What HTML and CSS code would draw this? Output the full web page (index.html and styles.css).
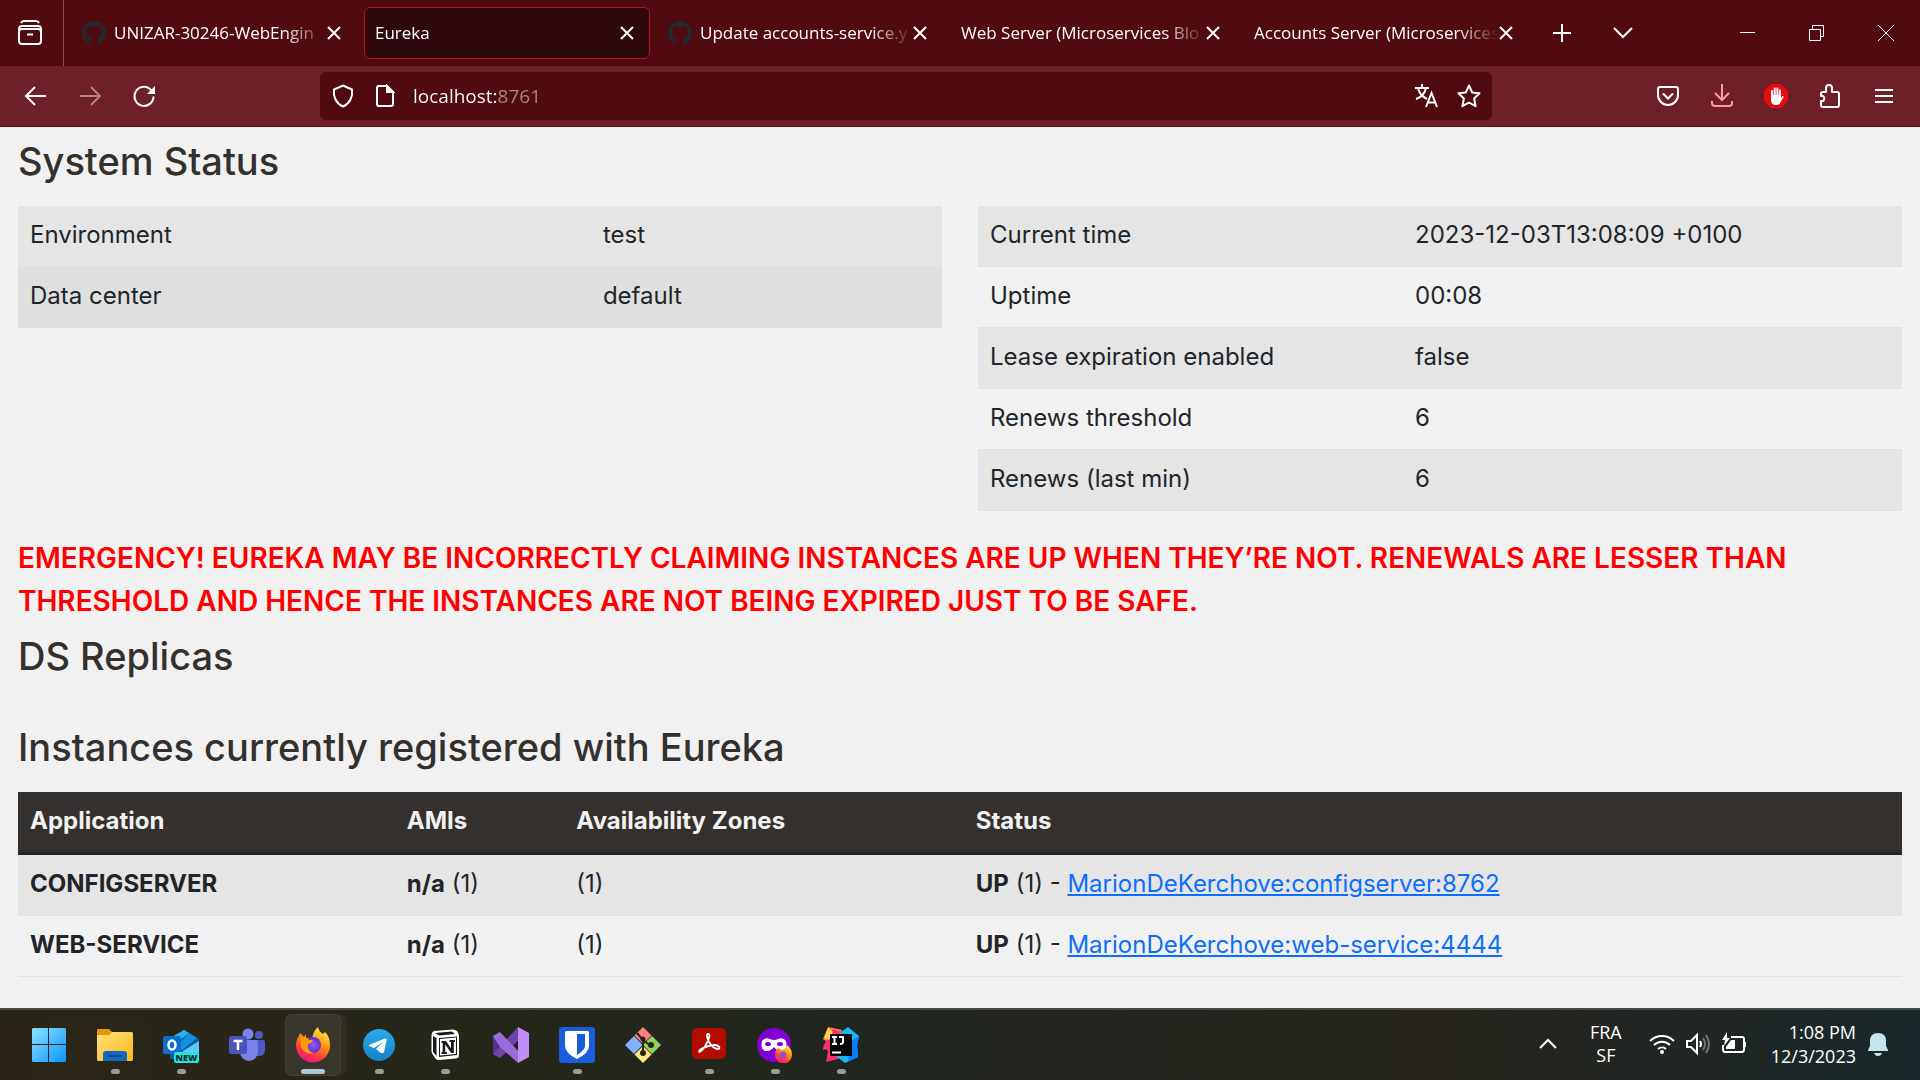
FILE: index.html
```html
<!DOCTYPE html>
<html lang="en">
<head>
<meta charset="utf-8">
<title>Eureka</title>
<link rel="stylesheet" href="styles.css">
</head>
<body>
<header class="browser">
  <div class="tabstrip">
    <button class="recent" aria-label="Recent browsing">
      <svg width="26" height="26" viewBox="0 0 26 26" fill="none" stroke="#fff" stroke-width="2"><rect x="2" y="9" width="22" height="15" rx="3"/><path d="M2 11V9q0-3 3-3h16q3 0 3 3v2M4 3q1-2 3-2h12q2 0 3 2M10 14.500h6"/></svg>
    </button>
    <div class="tabs">
      <div class="tab">
        <svg class="favicon" width="24" height="24" viewBox="0 0 16 16" fill="#24292e"><path d="M8 0C3.580 0 0 3.580 0 8c0 3.540 2.290 6.530 5.470 7.590.4.070.55-.17.55-.38 0-.19-.01-.82-.01-1.490-2.010.37-2.530-.49-2.690-.94-.09-.23-.48-.94-.82-1.130-.28-.15-.68-.52-.01-.53.63-.01 1.080.58 1.230.82.72 1.210 1.870.87 2.330.66.07-.52.28-.87.51-1.070-1.780-.2-3.640-.89-3.640-3.950 0-.87.31-1.590.82-2.150-.08-.2-.36-1.020.08-2.120 0 0 .67-.21 2.200.82a7.600 7.600 0 0 1 4 0c1.530-1.040 2.200-.82 2.200-.82.44 1.100.16 1.920.08 2.120.51.56.82 1.270.82 2.150 0 3.070-1.870 3.750-3.650 3.950.29.25.54.73.54 1.480 0 1.070-.01 1.930-.01 2.200 0 .21.15.46.55.38A8 8 0 0 0 16 8c0-4.420-3.580-8-8-8z"/></svg>
        <button class="title">UNIZAR-30246-WebEngin</button>
        <button class="close" aria-label="Close tab"><svg width="14" height="14" viewBox="0 0 14 14"><path d="M1 1l12 12M13 1L1 13"/></svg></button>
      </div>
      <div class="tab active">
        <button class="title">Eureka</button>
        <button class="close" aria-label="Close tab"><svg width="14" height="14" viewBox="0 0 14 14"><path d="M1 1l12 12M13 1L1 13"/></svg></button>
      </div>
      <div class="tab">
        <svg class="favicon" width="24" height="24" viewBox="0 0 16 16" fill="#24292e"><path d="M8 0C3.580 0 0 3.580 0 8c0 3.540 2.290 6.530 5.470 7.590.4.070.55-.17.55-.38 0-.19-.01-.82-.01-1.490-2.010.37-2.530-.49-2.690-.94-.09-.23-.48-.94-.82-1.130-.28-.15-.68-.52-.01-.53.63-.01 1.080.58 1.230.82.72 1.210 1.870.87 2.330.66.07-.52.28-.87.51-1.070-1.780-.2-3.640-.89-3.640-3.950 0-.87.31-1.590.82-2.150-.08-.2-.36-1.020.08-2.120 0 0 .67-.21 2.200.82a7.600 7.600 0 0 1 4 0c1.530-1.040 2.200-.82 2.200-.82.44 1.100.16 1.920.08 2.120.51.56.82 1.270.82 2.150 0 3.070-1.870 3.750-3.650 3.950.29.25.54.73.54 1.480 0 1.070-.01 1.930-.01 2.200 0 .21.15.46.55.38A8 8 0 0 0 16 8c0-4.420-3.580-8-8-8z"/></svg>
        <button class="title">Update accounts-service.y</button>
        <button class="close" aria-label="Close tab"><svg width="14" height="14" viewBox="0 0 14 14"><path d="M1 1l12 12M13 1L1 13"/></svg></button>
      </div>
      <div class="tab">
        <button class="title">Web Server (Microservices Blo</button>
        <button class="close" aria-label="Close tab"><svg width="14" height="14" viewBox="0 0 14 14"><path d="M1 1l12 12M13 1L1 13"/></svg></button>
      </div>
      <div class="tab">
        <button class="title">Accounts Server (Microservices</button>
        <button class="close" aria-label="Close tab"><svg width="14" height="14" viewBox="0 0 14 14"><path d="M1 1l12 12M13 1L1 13"/></svg></button>
      </div>
    </div>
    <div class="tabtools">
      <button aria-label="New tab"><svg width="18" height="18" viewBox="0 0 18 18"><path d="M9 0v18M0 9h18" stroke-width="2"/></svg></button>
      <button aria-label="List all tabs"><svg width="20" height="12" viewBox="0 0 20 12"><path d="M1 1l9 9 9-9" stroke-width="2"/></svg></button>
    </div>
    <div class="window">
      <button aria-label="Minimize"><svg width="16" height="16" viewBox="0 0 16 16"><path d="M0 7.500h15"/></svg></button>
      <button aria-label="Restore"><svg width="16" height="16" viewBox="0 0 16 16"><path d="M.5 4.500h11v11H.5zM3.500 4V.5h11v11H12"/></svg></button>
      <button aria-label="Close"><svg width="16" height="16" viewBox="0 0 16 16"><path d="M0 0l16 16M16 0L0 16"/></svg></button>
    </div>
  </div>
  <div class="toolbar">
    <div class="nav">
      <button aria-label="Back"><svg width="24" height="24" viewBox="0 0 24 24"><path d="M22 12H2M11 3l-9 9 9 9"/></svg></button>
      <button aria-label="Forward" disabled><svg width="24" height="24" viewBox="0 0 24 24"><path d="M2 12h20M13 3l9 9-9 9"/></svg></button>
      <button aria-label="Reload"><svg width="24" height="24" viewBox="0 0 24 24"><path d="M21.500 12.500A9.500 9.500 0 1 1 18 5l3 3"/><path d="M23 2v8h-8z" fill="#fff" stroke="none"/></svg></button>
    </div>
    <div class="urlbar">
      <button aria-label="Tracking protection"><svg width="24" height="24" viewBox="0 0 24 24"><path d="M12 1.500l9 4c1 7-2 14-9 17-7-3-10-10-9-17z"/></svg></button>
      <button aria-label="Site information"><svg width="20" height="24" viewBox="0 0 20 24"><path d="M4 2h8l6 6v12q0 2-2 2H4q-2 0-2-2V4q0-2 2-2z"/><path d="M12 2v6h6z" fill="#fff"/></svg></button>
      <input class="address" type="text" aria-label="Address" value="localhost:8761">
      <button aria-label="Translate"><svg width="24" height="24" viewBox="0 0 24 24"><path d="M0 4h14M7 0v4M3 4c1 5 5 9 9 11M11 4c-1 5-4 9-10 11M11 23l5.500-14L22 23M13 18.500h7.500"/></svg></button>
      <button aria-label="Bookmark"><svg width="24" height="24" viewBox="0 0 24 24"><path stroke-linejoin="round" d="M12 1.500l3.200 7 7.300.8-5.400 5.200 1.500 7.700L12 18.500l-6.600 3.700 1.500-7.700L1.500 9.300l7.300-.8z"/></svg></button>
    </div>
    <div class="actions">
      <button aria-label="Pocket"><svg width="24" height="24" viewBox="0 0 24 24"><path d="M4 3h16q2 0 2 2v6a10 10 0 0 1-20 0V5q0-2 2-2z"/><path d="M7 9.500l5 5 5-5"/></svg></button>
      <button aria-label="Downloads"><svg class="pink" width="24" height="24" viewBox="0 0 24 24"><path d="M12 0v16M5 9l7 7 7-7M2 17v2q0 3 3 3h14q3 0 3-3v-2"/></svg></button>
      <button aria-label="AdBlock"><svg width="24" height="24" viewBox="0 0 24 24"><path fill="#e40d0d" stroke="none" d="M7 0h10l7 7v10l-7 7H7l-7-7V7z"/><g stroke-linecap="round" stroke-width="2"><path d="M8 12V7M10.700 12V4.500M13.400 12V4.500M16 12V6.500"/><path fill="#fff" stroke="none" d="M7 11h10v3l1.500-2q1.500-.5 1 1L17 17.500q-1 3.500-5 3.500-5 0-5-5z"/></g></svg></button>
      <button aria-label="Extensions"><svg width="24" height="24" viewBox="0 0 24 24"><path stroke-linejoin="round" d="M8 8V4a3 3 0 0 1 6 0v4h5q2 0 2 2v11q0 2-2 2H5q-2 0-2-2v-4h2a3 3 0 0 0 0-5H3v-2q0-2 2-2z"/></svg></button>
      <button aria-label="Menu"><svg width="20" height="20" viewBox="0 0 20 20"><path d="M1 4h18M1 10h18M1 16h18"/></svg></button>
    </div>
  </div>
</header>

<main class="page">
  <h1>System Status</h1>
  <div class="status">
    <table class="grid general">
      <tbody>
        <tr><td class="name">Environment</td><td>test</td></tr>
        <tr><td>Data center</td><td>default</td></tr>
      </tbody>
    </table>
    <table class="grid striped times">
      <tbody>
        <tr><td class="name">Current time</td><td>2023-12-03T13:08:09 +0100</td></tr>
        <tr><td>Uptime</td><td>00:08</td></tr>
        <tr><td>Lease expiration enabled</td><td>false</td></tr>
        <tr><td>Renews threshold</td><td>6</td></tr>
        <tr><td>Renews (last min)</td><td>6</td></tr>
      </tbody>
    </table>
  </div>
  <p class="warning">EMERGENCY! EUREKA MAY BE INCORRECTLY CLAIMING INSTANCES ARE UP WHEN THEY’RE NOT. RENEWALS ARE LESSER THAN<br>THRESHOLD AND HENCE THE INSTANCES ARE NOT BEING EXPIRED JUST TO BE SAFE.</p>
  <h1>DS Replicas</h1>
  <h1 class="spaced">Instances currently registered with Eureka</h1>
  <table class="grid striped instances">
    <thead>
      <tr><th class="app-name">Application</th><th class="amis">AMIs</th><th class="zones">Availability Zones</th><th>Status</th></tr>
    </thead>
    <tbody>
      <tr><td><b>CONFIGSERVER</b></td><td><b>n/a</b> (1)</td><td>(1)</td><td><b>UP</b> (1) - <a href="#config">MarionDeKerchove:configserver:8762</a></td></tr>
      <tr><td><b>WEB-SERVICE</b></td><td><b>n/a</b> (1)</td><td>(1)</td><td><b>UP</b> (1) - <a href="#web">MarionDeKerchove:web-service:4444</a></td></tr>
    </tbody>
  </table>
</main>

<footer class="taskbar">
  <nav class="apps" aria-label="Taskbar">
    <button class="app" aria-label="Start"><svg width="36" height="36" viewBox="0 0 36 36"><defs><linearGradient id="win" x1="0" y1="0" x2="1" y2="1"><stop offset="0" stop-color="#8be3ff"/><stop offset="1" stop-color="#0a95ff"/></linearGradient></defs><path fill="url(#win)" d="M2 1h15v16H1V2zM18 1h16l1 1v15H18zM1 18h16v17H2l-1-1zM18 18h17v16l-1 1H18z"/></svg></button>
    <button class="app open" aria-label="File Explorer"><svg width="36" height="36" viewBox="0 0 36 36"><defs><linearGradient id="fold" x1="0" y1="0" x2="1" y2="1"><stop offset="0" stop-color="#ffe07a"/><stop offset="1" stop-color="#fbb917"/></linearGradient></defs><path fill="#e09a08" d="M0 3q0-1 1-1h11l3 3v5H0z"/><path fill="url(#fold)" d="M0 8h12l3-3h20l1 1v27l-1 1H1l-1-1z"/><path fill="#0e6abf" d="M6 34v-7q0-3 3-3h18q3 0 3 3v7z"/><path stroke="#08458c" stroke-width="2" d="M11 29h14"/></svg></button>
    <button class="app open" aria-label="Outlook (new)"><svg width="36" height="36" viewBox="0 0 36 36"><path fill="#0a5dad" d="M7 11L21 3l15 9v20H7z"/><path fill="#2cb0ef" d="M7 11L21 3l5 3-14 11-5-1z"/><path fill="#1590e0" d="M26 6l8 5-15 12-5-4z"/><path fill="#5cc8f8" d="M36 14v18H20v-8z"/><rect y="9" width="18" height="18" rx="2" fill="#0f6ecb"/><ellipse cx="9" cy="18" rx="3.500" ry="4.500" fill="none" stroke="#fff" stroke-width="2.500"/><rect x="11" y="25" width="25" height="11" rx="2" fill="#25e3d9"/><text x="23.500" y="34" text-anchor="middle" font-family="Open Sans, sans-serif" font-size="9" font-weight="800" fill="#08302f">NEW</text></svg></button>
    <button class="app" aria-label="Teams"><svg width="36" height="36" viewBox="0 0 36 36"><circle cx="30" cy="8" r="4" fill="#5059c9"/><path fill="#5059c9" d="M24 13h10q2 0 2 2v8q0 6-6 6h-6z"/><circle cx="19" cy="7" r="5.500" fill="#7b83eb"/><path fill="#7b83eb" d="M10 13h17q2 0 2 2v10a9 9 0 0 1-18 0z"/><rect y="9" width="18" height="18" rx="2" fill="#4b53bc"/><path fill="none" stroke="#fff" stroke-width="2.500" d="M4.500 14h9M9 14v9"/></svg></button>
    <button class="app open current" aria-label="Firefox"><svg width="36" height="36" viewBox="0 0 36 36"><defs><linearGradient id="ff" x1=".8" y1="0" x2=".3" y2="1"><stop offset="0" stop-color="#fff44f"/><stop offset=".4" stop-color="#ff980e"/><stop offset=".75" stop-color="#ff3647"/><stop offset="1" stop-color="#e31587"/></linearGradient><radialGradient id="ffc"><stop offset="0" stop-color="#9059ff"/><stop offset="1" stop-color="#6030c0"/></radialGradient></defs><path fill="url(#ff)" d="M23 0q1 5 5 7l2-2q5 5 5 13a17 17 0 0 1-34 1q0-7 3-10l1-3 4 4 2-3v4q3-1 6 1 1-8 6-12z"/><circle cx="18" cy="18" r="8" fill="url(#ffc)"/><path fill="#ff980e" d="M5 11q6-2 9 2h4q-1 3-5 4-1 8 6 9-9 2-13-6z"/></svg></button>
    <button class="app open" aria-label="Telegram"><svg width="36" height="36" viewBox="0 0 36 36"><defs><linearGradient id="tg" x1="0" y1="0" x2="0" y2="1"><stop offset="0" stop-color="#2aabee"/><stop offset="1" stop-color="#1583c4"/></linearGradient></defs><circle cx="18" cy="18" r="16" fill="url(#tg)"/><path fill="#fff" d="M8 18l16-6.500q2 0 1.500 2L23 25q-1 2-3 1l-5-4 7-7-9 6-5-2z"/></svg></button>
    <button class="app open" aria-label="Notion"><svg width="36" height="36" viewBox="0 0 36 36"><path fill="#fff" d="M7 4l19-1.500q2 0 4 1.500l1 2q1 1 1 3v19q0 3-3 3.500l-17 1.500q-3 0-4-2l-2.500-4q-1-1-1-3V8q0-3 2.500-4z"/><path fill="#1b1b1b" d="M8 6l17-1.500L28 7l-16 1.500zM6 9l3.500 2v18L6 25zM12 11l18-1.500V28l-18 2z"/><path fill="#fff" d="M13 12l16-1.500V27l-16 1.500z"/><path fill="#1b1b1b" d="M14.500 14h4.500l5 7.500v-6.500h-1.500v-2H28v2h-1.200v11h-2.600l-6-8.500v7.500H20v2h-5.500v-2h1.200V16h-1.200z"/></svg></button>
    <button class="app" aria-label="Visual Studio"><svg width="36" height="36" viewBox="0 0 36 36"><path fill="#52338f" d="M0 9l7-4v26l-7-4z"/><path fill="#6d45a8" d="M0 27L25 0l4 10L7 31z"/><path fill="#9a6bdb" d="M0 9l7-4 23 24-5 7L7 20z"/><path fill="#c28df5" d="M25 0l11 6v24l-11 6z"/></svg></button>
    <button class="app open" aria-label="Bitwarden"><svg width="36" height="36" viewBox="0 0 36 36"><rect width="36" height="36" rx="3" fill="#175ddc"/><path fill="#fff" d="M7 4h22l1 1v14q0 7-12 13Q6 26 6 19V5z"/><path fill="#175ddc" d="M18 7h8v12q0 4-8 9z"/></svg></button>
    <button class="app" aria-label="Git"><svg width="36" height="36" viewBox="0 0 36 36"><path fill="#ff8080" d="M18 0l8.500 8.500L18 17 9.500 8.500z"/><path fill="#80b3ff" d="M9 9l8.500 9L9 27 0 18z"/><path fill="#8dd35f" d="M27 9l9 9-9 9-9-9z"/><path fill="#ffe680" d="M18 19l8.500 8.500L18 36l-8.500-8.500z"/><path d="M12 6l6 7v13M18 13l8 6" fill="none" stroke="#25261b" stroke-width="2"/><g fill="#25261b"><circle cx="18" cy="12" r="2.500"/><circle cx="26" cy="18" r="3"/><circle cx="18" cy="26" r="3"/></g></svg></button>
    <button class="app open" aria-label="Acrobat"><svg width="36" height="36" viewBox="0 0 36 36"><rect x="1" y="1" width="34" height="31" rx="5" fill="#b30b00"/><path fill="none" stroke="#fff" stroke-width="1.800" d="M17 7c-2 0-1 4 1 8s6 7 9 7 1-4-3-4c-5 0-10 2-14 4-3 2-2 4 0 2 3-2 6-8 8-13 1-3 0-4-1-4z"/></svg></button>
    <button class="app open" aria-label="Firefox Private Browsing"><svg width="36" height="36" viewBox="0 0 36 36"><circle cx="17" cy="18" r="17" fill="#8000d7"/><path fill="#fff" d="M5 14q3-4 8-2 4 2 8 0 5-2 8 2 2 10-5 10-4 0-7-4-3 4-7 4-7 0-5-10z"/><g fill="#8000d7"><ellipse cx="11" cy="17" rx="3" ry="2"/><ellipse cx="23" cy="17" rx="3" ry="2"/></g><path fill="url(#ff)" d="M30 18q5 4 5 10a8.500 8.500 0 0 1-17 0q0-5 3-7l4 2q4-1 5-5z"/><circle cx="26" cy="28" r="3.500" fill="#9050d0"/></svg></button>
    <button class="app open" aria-label="IntelliJ IDEA"><svg width="36" height="36" viewBox="0 0 36 36"><path fill="#fe8f3c" d="M5 0l14 3-4 12-15 8 3-9-3-2z"/><path fill="#fe2d72" d="M0 20l10-18 9 3v26L3 35l2-11z"/><path fill="#ffd34f" d="M5 1l5 4-4 8-5-2z"/><path fill="#19b7f2" d="M17 6l8-6 11 9-2 10 1 11-13 6-9-7z"/><path fill="#087cfa" d="M28 14l8-5-2 10 1 11-10 5z"/><rect x="7" y="7" width="22" height="22" fill="#080808"/><path stroke="#fff" stroke-width="2" fill="none" d="M9 10h5M11.500 10v7M9 17h5M16 10h4v5q0 2-3 2M9 25.500h9"/></svg></button>
  </nav>
  <div class="tray">
    <button class="more" aria-label="Hidden icons"><svg width="18" height="18" viewBox="0 0 18 18"><path d="M1 13l8-8 8 8"/></svg></button>
    <button class="lang">FRA<br>SF</button>
    <button class="quick" aria-label="Network, volume and battery">
      <svg width="26" height="24" viewBox="0 0 26 24"><path d="M1 9a17 17 0 0 1 24 0M5 13a11.500 11.500 0 0 1 16 0M9 17a6 6 0 0 1 8 0"/><circle cx="13" cy="20" r="2" fill="#fff" stroke="none"/></svg>
      <svg width="26" height="24" viewBox="0 0 26 24"><path d="M2 9h4l6-6v18l-6-6H2z"/><path d="M15 9q2 3 0 6"/><path stroke="#777" d="M18 6q4 6 0 12M21 3q6 9 0 18"/></svg>
      <svg width="26" height="24" viewBox="0 0 26 24"><path d="M10 5h11q2 0 2 2v10q0 3-2 3H4q-2 0-2-3v-4M24 10v5"/><path fill="#fff" stroke="none" d="M6 0L1 8h3l-1 6 6-8H6zM10 8h4v9H5v-2z"/></svg>
    </button>
    <button class="clock">1:08 PM<br>12/3/2023</button>
    <button class="bell" aria-label="Notifications"><svg width="22" height="24" viewBox="0 0 22 24"><path fill="#c3e5ee" stroke="none" d="M11 1q8 0 8 8v5l2 4v1H1v-1l2-4V9q0-8 8-8zM7 21h8q-1 3-4 3t-4-3z"/></svg></button>
  </div>
</footer>
</body>
</html>
```
FILE: styles.css
```css
* { box-sizing: border-box; }

body {
  margin: 0;
  min-height: 100vh;
  display: flex;
  flex-direction: column;
  background: #f1f1f1;
  color: #212529;
  font-family: Inter, sans-serif;
  font-size: 24px;
  line-height: 36px;
}

button {
  padding: 0;
  border: 0;
  background: none;
  color: inherit;
  font: inherit;
  display: flex;
  align-items: center;
  justify-content: center;
}

svg { flex: none; }

.browser,
.taskbar {
  color: #fff;
  font-family: "Open Sans", sans-serif;
  font-size: 18px;
  line-height: 24px;
}

.browser svg,
.tray svg {
  fill: none;
  stroke: #fff;
  stroke-width: 2;
}

/* Tab strip */
.tabstrip {
  display: flex;
  height: 66px;
  background: #510a10;
}

.recent {
  width: 64px;
  padding-right: 4px;
  border-right: 1px solid #8a5055;
}

.tabs {
  display: flex;
  gap: 7px;
  padding: 7px 2px 7px 7px;
}

.tab {
  display: flex;
  align-items: center;
  width: 286px;
  padding: 0 15px 0 10px;
  border: 1px solid transparent;
  border-radius: 6px;
}

.tab.active {
  background: #2e0a0e;
  border-color: #b5142b;
}

.browser .favicon {
  margin-right: 8px;
  fill: #24292e;
  stroke: none;
}

.tab .title {
  flex: 1;
  min-width: 0;
  overflow: hidden;
  font-size: 17px;
  white-space: nowrap;
  justify-content: flex-start;
  mask-image: linear-gradient(to left, transparent, #000 44px);
}

.tabtools {
  display: flex;
}

.tabtools button { width: 61px; }

.window {
  display: flex;
  margin-left: auto;
}

.window button { width: 69px; }
.window svg { stroke-width: 1; }

/* Navigation toolbar */
.toolbar {
  display: flex;
  align-items: center;
  justify-content: space-between;
  height: 61px;
  padding: 0 9px;
  background: #6f1f28;
  border-bottom: 1px solid #510a10;
}

.nav,
.actions {
  display: flex;
}

.nav { width: 311px; }

.nav button,
.actions button {
  width: 54px;
  height: 48px;
}

.nav button:disabled { opacity: .45; }

.urlbar {
  flex: 1;
  display: flex;
  align-items: center;
  height: 48px;
  margin-right: 149px;
  padding: 0 2px;
  background: #510a10;
  border-radius: 6px;
}

.urlbar button { width: 42px; }

.address {
  flex: 1;
  min-width: 0;
  height: 30px;
  padding: 0;
  margin-left: 7px;
  border: 0;
  font: inherit;
  font-size: 19px;
  color: transparent;
  background: linear-gradient(to right, #fff 83px, #b08588 83px);
  background-clip: text;
}

.browser .pink { stroke: #ff9aa2; }

/* Dashboard */
.page {
  flex: 1;
  padding: 13px 18px 30px;
}

h1 {
  margin: 0;
  color: #34302d;
  font-size: 38px;
  font-weight: 500;
  line-height: 43px;
}

.status {
  display: grid;
  grid-template-columns: 1fr 1fr;
  gap: 36px;
  align-items: start;
  margin: 23px 0 26px;
}

.grid {
  width: 100%;
  table-layout: fixed;
  border-collapse: separate;
  border-spacing: 0;
}

.grid td,
.grid th {
  height: 61px;
  padding: 11px 12px 13px;
  border-bottom: 1px solid #dee2e6;
  text-align: left;
  vertical-align: top;
  white-space: nowrap;
}

.grid b { font-weight: 700; }

.general tr { background: #e5e5e5; }
.general tr:last-child { background: #dfdfdf; }
.general .name { width: 62%; }
.times .name { width: 46%; }
.striped tbody tr:nth-child(odd) { background: #e5e5e5; }

.warning {
  margin: 0 0 12px;
  color: #f00;
  font-size: 28px;
  font-weight: 600;
  line-height: 43px;
}

h1.spaced { margin: 48px 0 23px; }

.instances .app-name { width: 20%; }
.instances .amis { width: 9%; }
.instances .zones { width: 21.2%; }

.instances th {
  height: 63px;
  background: #34302d;
  border-bottom: 3px solid #212529;
  color: #f1f1f1;
  font-weight: 700;
}

.instances a { color: #0d6efd; }

/* Taskbar */
.taskbar {
  display: flex;
  justify-content: space-between;
  height: 72px;
  border-top: 2px solid #474745;
  background: linear-gradient(to right, #2b2517, #24261a 28%, #20261f 45%, #26241c 75%, #1a282b);
}

.apps {
  display: flex;
  gap: 12px;
  padding: 5px 22px;
}

.taskbar .app {
  width: 54px;
  height: 60px;
  border-radius: 6px;
  position: relative;
}

.open::after {
  content: "";
  position: absolute;
  bottom: 1px;
  left: 23px;
  width: 9px;
  height: 5px;
  border-radius: 3px;
  background: #9b9b96;
}

.current {
  background: #38352b;
  box-shadow: 0 0 0 1px #444137, 7px 0 0 0 #302d22;
}

.current::after {
  left: 15px;
  width: 24px;
  background: #a8c8d6;
}

.tray {
  display: flex;
  align-items: center;
  padding: 0 31px 2px 0;
}

.more { margin-right: 33px; }

.lang {
  margin-right: 27px;
  line-height: 23px;
}

.quick {
  gap: 10px;
  margin-right: 24px;
}

.clock {
  margin-right: 11px;
  text-align: right;
}
```
